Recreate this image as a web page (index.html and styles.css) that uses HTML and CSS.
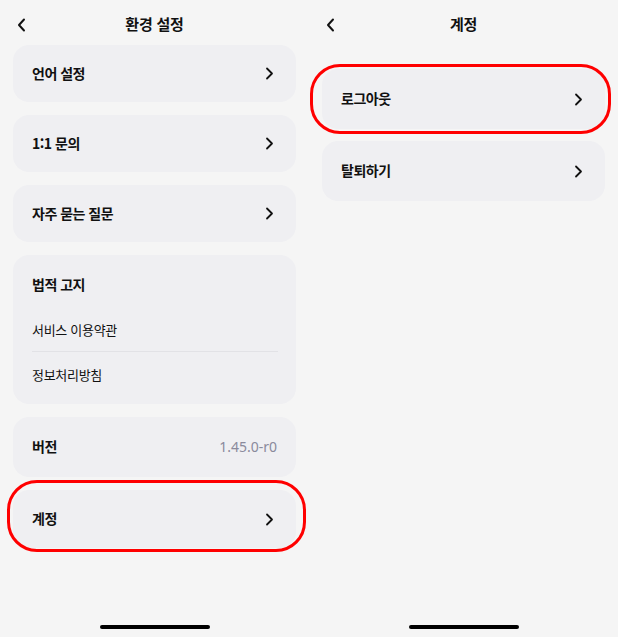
FILE: index.html
```html
<!DOCTYPE html>
<html lang="ko">
<head>
<meta charset="utf-8">
<title>설정</title>
<link rel="stylesheet" href="styles.css">
</head>
<body>
<div class="screens">
  <section class="panel">
    <header class="topbar">
      <svg class="back" width="9" height="14" viewBox="0 0 9 14"><path d="M7 1.5 L2 7 L7 12.5" fill="none" stroke="#111" stroke-width="2" stroke-linecap="round" stroke-linejoin="round"/></svg>
      <h1 class="title">환경 설정</h1>
    </header>
    <div class="list">
      <div class="card row"><span class="label">언어 설정</span><svg class="chev" width="9" height="13" viewBox="0 0 9 13"><path d="M2 1.5 L7 6.5 L2 11.5" fill="none" stroke="#111" stroke-width="1.8" stroke-linecap="round" stroke-linejoin="round"/></svg></div>
      <div class="card row"><span class="label">1:1 문의</span><svg class="chev" width="9" height="13" viewBox="0 0 9 13"><path d="M2 1.5 L7 6.5 L2 11.5" fill="none" stroke="#111" stroke-width="1.8" stroke-linecap="round" stroke-linejoin="round"/></svg></div>
      <div class="card row"><span class="label">자주 묻는 질문</span><svg class="chev" width="9" height="13" viewBox="0 0 9 13"><path d="M2 1.5 L7 6.5 L2 11.5" fill="none" stroke="#111" stroke-width="1.8" stroke-linecap="round" stroke-linejoin="round"/></svg></div>
      <div class="card legal">
        <div class="label legal-title">법적 고지</div>
        <div class="sub">서비스 이용약관</div>
        <div class="divider"></div>
        <div class="sub">정보처리방침</div>
      </div>
      <div class="card row version"><span class="label">버전</span><span class="ver">1.45.0-r0</span></div>
      <div class="card row account highlight hl-left"><span class="label">계정</span><svg class="chev" width="9" height="13" viewBox="0 0 9 13"><path d="M2 1.5 L7 6.5 L2 11.5" fill="none" stroke="#111" stroke-width="1.8" stroke-linecap="round" stroke-linejoin="round"/></svg></div>
    </div>
    <div class="home"></div>
  </section>
  <section class="panel">
    <header class="topbar">
      <svg class="back" width="9" height="14" viewBox="0 0 9 14"><path d="M7 1.5 L2 7 L7 12.5" fill="none" stroke="#111" stroke-width="2" stroke-linecap="round" stroke-linejoin="round"/></svg>
      <h1 class="title">계정</h1>
    </header>
    <div class="list list-account">
      <div class="card row tall highlight hl-right"><span class="label">로그아웃</span><svg class="chev" width="9" height="13" viewBox="0 0 9 13"><path d="M2 1.5 L7 6.5 L2 11.5" fill="none" stroke="#111" stroke-width="1.8" stroke-linecap="round" stroke-linejoin="round"/></svg></div>
      <div class="card row tall"><span class="label">탈퇴하기</span><svg class="chev" width="9" height="13" viewBox="0 0 9 13"><path d="M2 1.5 L7 6.5 L2 11.5" fill="none" stroke="#111" stroke-width="1.8" stroke-linecap="round" stroke-linejoin="round"/></svg></div>
    </div>
    <div class="home"></div>
  </section>
</div>
</body>
</html>
```
FILE: styles.css
```css
* { box-sizing: border-box; }
html, body {
  margin: 0;
  padding: 0;
  background: #f5f5f5;
}
body {
  font-family: "Noto Sans CJK KR", "Noto Sans", sans-serif;
  color: #111;
}
.screens {
  display: flex;
  width: 618px;
  height: 637px;
}
.panel {
  width: 309px;
  height: 637px;
  display: flex;
  flex-direction: column;
  padding: 0 13px;
}
.topbar {
  height: 45px;
  position: relative;
  display: flex;
  align-items: center;
  justify-content: center;
  padding-top: 3px;
}
.back {
  position: absolute;
  left: 4px;
  top: 18px;
}
.title {
  margin: 0;
  font-size: 15px;
  font-weight: 700;
  line-height: 20px;
  letter-spacing: -0.2px;
}
.list {
  display: flex;
  flex-direction: column;
  gap: 13px;
}
.list-account {
  margin-top: 24px;
  gap: 12px;
}
.card {
  background: #efeff2;
  border-radius: 16px;
  position: relative;
}
.row {
  height: 57px;
  display: flex;
  align-items: center;
  justify-content: space-between;
  padding: 0 22px 2px 19px;
}
.row .chev { margin-top: 2px; }
.row.tall { height: 60px; }
.version { height: 60px; padding-right: 19px; }
.account { height: 58px; }
.label {
  font-size: 14px;
  font-weight: 700;
  line-height: 22px;
  letter-spacing: -0.5px;
}
.ver {
  font-size: 14px;
  color: #8a8a9c;
  font-family: "Noto Sans", "Noto Sans CJK KR", sans-serif;
}
.legal {
  padding: 18px 18px 8px 19px;
}
.legal-title { display: block; margin-bottom: 12px; }
.sub {
  height: 44px;
  display: flex;
  align-items: center;
  font-size: 13px;
  font-weight: 400;
  letter-spacing: -0.3px;
}
.divider {
  height: 1px;
  background: #e2e2e6;
}
.highlight::after {
  content: "";
  position: absolute;
  border: 3.5px solid #f00;
  border-radius: 30px;
  pointer-events: none;
}
.hl-left::after {
  left: -6px;
  right: -10px;
  top: -10px;
  bottom: -4px;
}
.hl-right::after {
  left: -12px;
  right: -6px;
  top: -5px;
  bottom: -5px;
}
.home {
  margin: auto auto 8px;
  width: 110px;
  height: 4px;
  border-radius: 2px;
  background: #000;
}
```
